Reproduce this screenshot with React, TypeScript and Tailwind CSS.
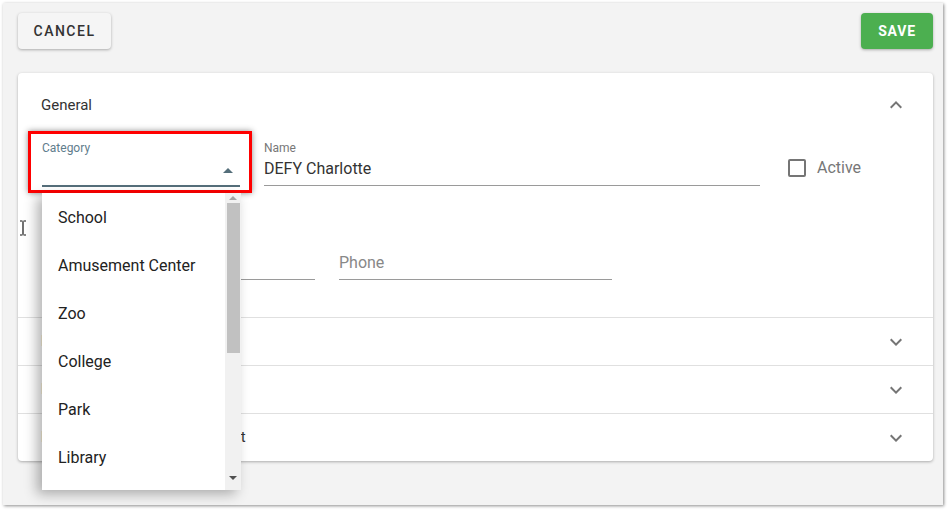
import React from 'react';

const ExpandMore = ({ up = false }: { up?: boolean }) => (
    <svg width="24" height="24" viewBox="0 0 24 24" className={up ? 'rotate-180' : ''}>
        <path d="M7.41 8.59 12 13.17l4.59-4.58L18 10l-6 6-6-6z" fill="#757575" />
    </svg>
);

const sections = ['Location', 'Hours of Operation', 'Billing Contact & Management'];
const categories = ['School', 'Amusement Center', 'Zoo', 'College', 'Park', 'Library'];

const App = () => {
    return (
        <div className="w-[952px] h-[512px] bg-white font-['Roboto',sans-serif] pt-[3px] pl-[3px]">
            <div className="relative w-[940px] h-[502px] bg-[#f3f3f3] shadow-[1px_1px_3px_rgba(0,0,0,0.45)] pl-[15px] pr-[10px] pt-[10px]">
                <div className="flex justify-between items-center">
                    <button className="w-[93px] h-[36px] rounded bg-[#f5f5f5] shadow-[0_1px_3px_rgba(0,0,0,0.3)] text-[14px] font-medium tracking-[1.5px] text-[#333]">
                        CANCEL
                    </button>
                    <button className="w-[72px] h-[36px] rounded bg-[#4caf50] shadow-[0_1px_3px_rgba(0,0,0,0.3)] text-[14px] font-bold tracking-[0.8px] text-white">
                        SAVE
                    </button>
                </div>

                <div className="mt-[24px] w-[915px] bg-white rounded shadow-[0_1px_3px_rgba(0,0,0,0.3)]">
                    <div className="h-[64px] flex items-center justify-between pl-[23px] pr-[25px]">
                        <span className="text-[15px] text-[#333]">General</span>
                        <ExpandMore up />
                    </div>
                    <div className="px-[24px] pb-[37px]">
                        <div className="flex items-start">
                            <div className="w-[198px] pt-[4px]">
                                <div className="text-[12px] leading-[14px] text-[#5f7d8c]">Category</div>
                                <div className="h-[30px] flex items-center justify-end pr-[7px]">
                                    <div className="w-0 h-0 border-l-[5px] border-r-[5px] border-b-[5px] border-l-transparent border-r-transparent border-b-[#546e7a]" />
                                </div>
                                <div className="h-[2px] bg-[#546e7a]" />
                            </div>
                            <div className="ml-[24px] w-[496px] pt-[4px]">
                                <div className="text-[12px] leading-[14px] text-[#777]">Name</div>
                                <div className="h-[29px] pb-px flex items-center text-[16px] text-[#333]">DEFY Charlotte</div>
                                <div className="mt-px h-px bg-[#9a9a9a]" />
                            </div>
                            <div className="ml-[28px] mt-[19px] flex items-center">
                                <div className="w-[18px] h-[18px] border-2 border-[#757575] rounded-[2px]" />
                                <span className="ml-[11px] text-[16px] text-[#777]">Active</span>
                            </div>
                        </div>
                        <div className="flex mt-[59px]">
                            <div className="w-[273px]">
                                <div className="h-[33px]" />
                                <div className="h-px bg-[#9a9a9a]" />
                            </div>
                            <div className="ml-[24px] w-[273px]">
                                <div className="h-[33px] flex items-center text-[16px] text-[#888]">Phone</div>
                                <div className="h-px bg-[#9a9a9a]" />
                            </div>
                        </div>
                    </div>
                    {sections.map((s) => (
                        <div key={s} className="h-[48px] border-t border-[#e0e0e0] flex items-center justify-between pl-[23px] pr-[25px]">
                            <span className="text-[15px] tracking-[0.1px] text-[#333]">{s}</span>
                            <ExpandMore />
                        </div>
                    ))}
                </div>

                {/* annotation box around the focused field */}
                <div className="absolute left-[25px] top-[128px] w-[224px] h-[62px] border-[3px] border-[#ff0000] shadow-[0_0_6px_rgba(0,0,0,0.45)]" />

                {/* open select menu */}
                <div className="absolute left-[39px] top-[190px] w-[199px] h-[297px] bg-white shadow-[-5px_4px_12px_rgba(0,0,0,0.3)] flex overflow-hidden">
                    <div className="flex-1 pt-px">
                        {categories.map((c) => (
                            <div key={c} className="h-[48px] flex items-center pl-[16px] text-[16px] text-[#222]">
                                {c}
                            </div>
                        ))}
                    </div>
                    <div className="w-[16px] bg-[#f1f1f1] flex flex-col items-center">
                        <div className="h-[10px] flex items-center">
                            <div className="w-0 h-0 border-l-[4px] border-r-[4px] border-b-[4px] border-l-transparent border-r-transparent border-b-[#a3a3a3]" />
                        </div>
                        <div className="w-[13px] h-[150px] bg-[#c1c1c1]" />
                        <div className="flex-1" />
                        <div className="h-[14px] flex items-start">
                            <div className="w-0 h-0 border-l-[4px] border-r-[4px] border-t-[4px] border-l-transparent border-r-transparent border-t-[#505050]" />
                        </div>
                    </div>
                </div>

                {/* mouse text cursor */}
                <svg className="absolute left-[16px] top-[217px]" width="8" height="16" viewBox="0 0 8 16">
                    <path d="M1 1h2.5M4.5 1H7M4 1.5v13M1 15h2.5M4.5 15H7" stroke="#111" strokeWidth="1.2" fill="none" />
                </svg>
            </div>
        </div>
    );
};

export default App;
